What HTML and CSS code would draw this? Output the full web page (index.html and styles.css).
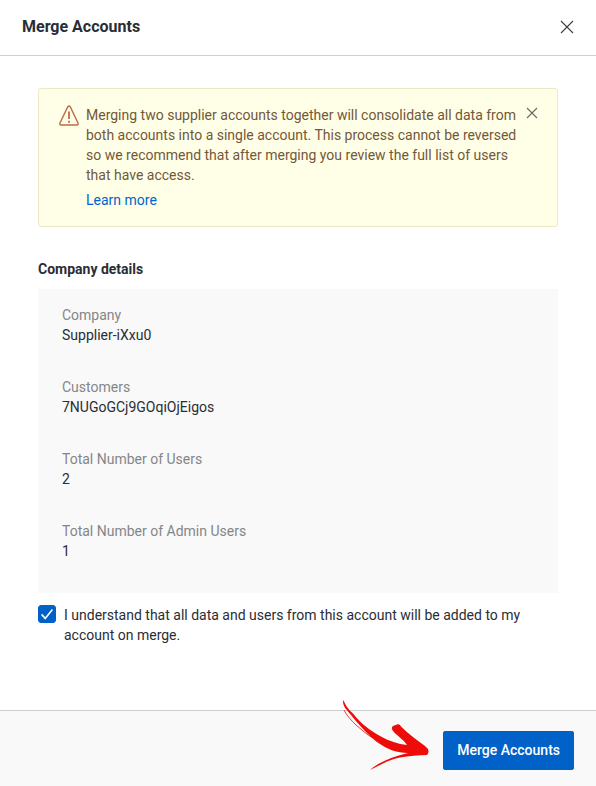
FILE: index.html
```html
<!DOCTYPE html>
<html lang="en">
<head>
  <meta charset="UTF-8" />
  <meta name="viewport" content="width=device-width, initial-scale=1.0"/>
  <title>Merge Accounts</title>
  <link rel="stylesheet" href="styles.css">
</head>
<body>
  <header class="header">
    <h1>Merge Accounts</h1>
    <button type="button" class="close" aria-label="Close">
      <svg width="14" height="14" viewBox="0 0 14 14"><path d="M1 1l12 12M13 1L1 13"/></svg>
    </button>
  </header>

  <main class="content">
    <div class="alert">
      <svg class="alert-icon" width="20" height="21" viewBox="0 0 20 21">
        <path d="M8.8 1.7Q10 .3 11.2 1.7L19 18Q19.6 19.8 18 20H2Q.4 19.8 1 18Z"/>
        <path d="M10 6.5v7.5M10 15.8v1.9" class="mark"/>
      </svg>
      <div class="alert-text">
        <p>Merging two supplier accounts together will consolidate all data from both accounts into a single account. This process cannot be reversed so we recommend that after merging you review the full list of users that have access.</p>
        <a href="#">Learn more</a>
      </div>
      <button type="button" class="close small" aria-label="Dismiss">
        <svg width="12" height="12" viewBox="0 0 12 12"><path d="M1 1l10 10M11 1L1 11"/></svg>
      </button>
    </div>

    <h2>Company details</h2>
    <dl class="details">
      <div class="item">
        <dt>Company</dt>
        <dd>Supplier-iXxu0</dd>
      </div>
      <div class="item">
        <dt>Customers</dt>
        <dd>7NUGoGCj9GOqiOjEigos</dd>
      </div>
      <div class="item">
        <dt>Total Number of Users</dt>
        <dd>2</dd>
      </div>
      <div class="item">
        <dt>Total Number of Admin Users</dt>
        <dd>1</dd>
      </div>
    </dl>

    <div class="confirm">
      <span class="check">
        <input type="checkbox" id="understand" checked>
        <svg width="18" height="18" viewBox="0 0 18 18"><path d="M3.6 9.4l3.6 4L14.4 4.4"/></svg>
      </span>
      <label for="understand">I understand that all data and users from this account will be added to my account on merge.</label>
    </div>
  </main>

  <footer class="footer">
    <div class="action">
      <svg class="arrow" width="86" height="72" viewBox="0 0 86 72">
        <path d="M.5 1C2 5 4 9 10 14.500C18 25 28 32 37 37C46 42 55 45 64 46C60 40 53 36 50 32C48 29 49 28 50 27L54 25.500C56 25 57 26 58 27.500C65 35 74 41 82 47Q86 50 85.500 53Q85 55 84 56C75 56 66 57 57 58.500C49 60 43 63 37 66L27 71C36 63 49 58 65 54C54 54 44 50 37 45C32 42 27 37 22 32C17 27 12 21 8 16C3 10 .5 8 0 3Z"/>
        <path class="streak" d="M1 11C4 17 8 21 13 26C18 30 24 36 30 39"/>
      </svg>
      <button type="button" class="primary">Merge Accounts</button>
    </div>
  </footer>
</body>
</html>
```

FILE: styles.css
```css
* {
  box-sizing: border-box;
}

body {
  margin: 0;
  min-height: 100vh;
  display: flex;
  flex-direction: column;
  font-family: Roboto, "Liberation Sans", sans-serif;
  font-size: 14px;
  line-height: 20px;
  color: #2a2d34;
  background-color: #fff;
}

h1, h2, p, dl, dd {
  margin: 0;
}

.header {
  display: flex;
  align-items: center;
  justify-content: space-between;
  padding: 15px 22px 16px;
  border-bottom: 1px solid #cfd0d1;
}

h1 {
  font-size: 16px;
  line-height: 24px;
  font-weight: 700;
}

.close {
  display: flex;
  padding: 0;
  border: none;
  background: none;
  cursor: pointer;
}

.close svg {
  fill: none;
  stroke: #3b3e42;
  stroke-width: 1.1;
}

.close.small svg {
  stroke: #66685c;
}

.content {
  flex: 1;
  padding: 32px 38px;
}

.alert {
  display: flex;
  align-items: flex-start;
  gap: 7px;
  padding: 16px 19px 16px 20px;
  margin-bottom: 32px;
  color: #735838;
  background-color: #ffffe8;
  border: 1px solid #ece8c6;
  border-radius: 3px;
}

.alert-icon {
  flex-shrink: 0;
  fill: none;
  stroke: #c06a48;
  stroke-width: 1.4;
}

.alert-icon .mark {
  stroke-width: 1.8;
}

.alert-text {
  flex: 1;
}

.alert-text a {
  display: inline-block;
  margin-top: 5px;
  color: #0064cc;
  text-decoration: none;
  vertical-align: top;
}

.close.small {
  padding-top: 2px;
}

h2 {
  margin-bottom: 10px;
  font-size: 14px;
  line-height: 20px;
  font-weight: 700;
}

.details {
  padding: 16px 24px 0;
  margin-bottom: 12px;
  background-color: #f9f9f9;
}

.item {
  padding-bottom: 32px;
}

.item dt {
  color: #858688;
}

.confirm {
  display: flex;
  align-items: flex-start;
  gap: 8px;
}

.check {
  display: grid;
  flex-shrink: 0;
}

.check input,
.check svg {
  grid-area: 1 / 1;
}

.check input {
  appearance: none;
  width: 18px;
  height: 18px;
  margin: 0;
  border: 1px solid #0061c9;
  border-radius: 3px;
}

.check input:checked {
  background-color: #0061c9;
}

.check svg {
  fill: none;
  stroke: #fff;
  stroke-width: 1.6;
  pointer-events: none;
  z-index: 1;
}

.footer {
  display: flex;
  justify-content: flex-end;
  padding: 20px 22px 16px;
  background-color: #f9f9f9;
  border-top: 1px solid #cfd0d1;
}

.action {
  position: relative;
}

/* hand-drawn pointer next to the main button */
.arrow {
  position: absolute;
  right: 100%;
  bottom: -1px;
  margin-right: 14px;
  fill: #ee0c08;
}

.arrow .streak {
  fill: none;
  stroke: #ee0c08;
  stroke-width: 0.8;
}

.primary {
  padding: 8px 13px 9px;
  border: 1px solid #0061c9;
  border-radius: 2px;
  font: inherit;
  font-weight: 500;
  color: #fff;
  background-color: #0061c9;
  cursor: pointer;
}
```
